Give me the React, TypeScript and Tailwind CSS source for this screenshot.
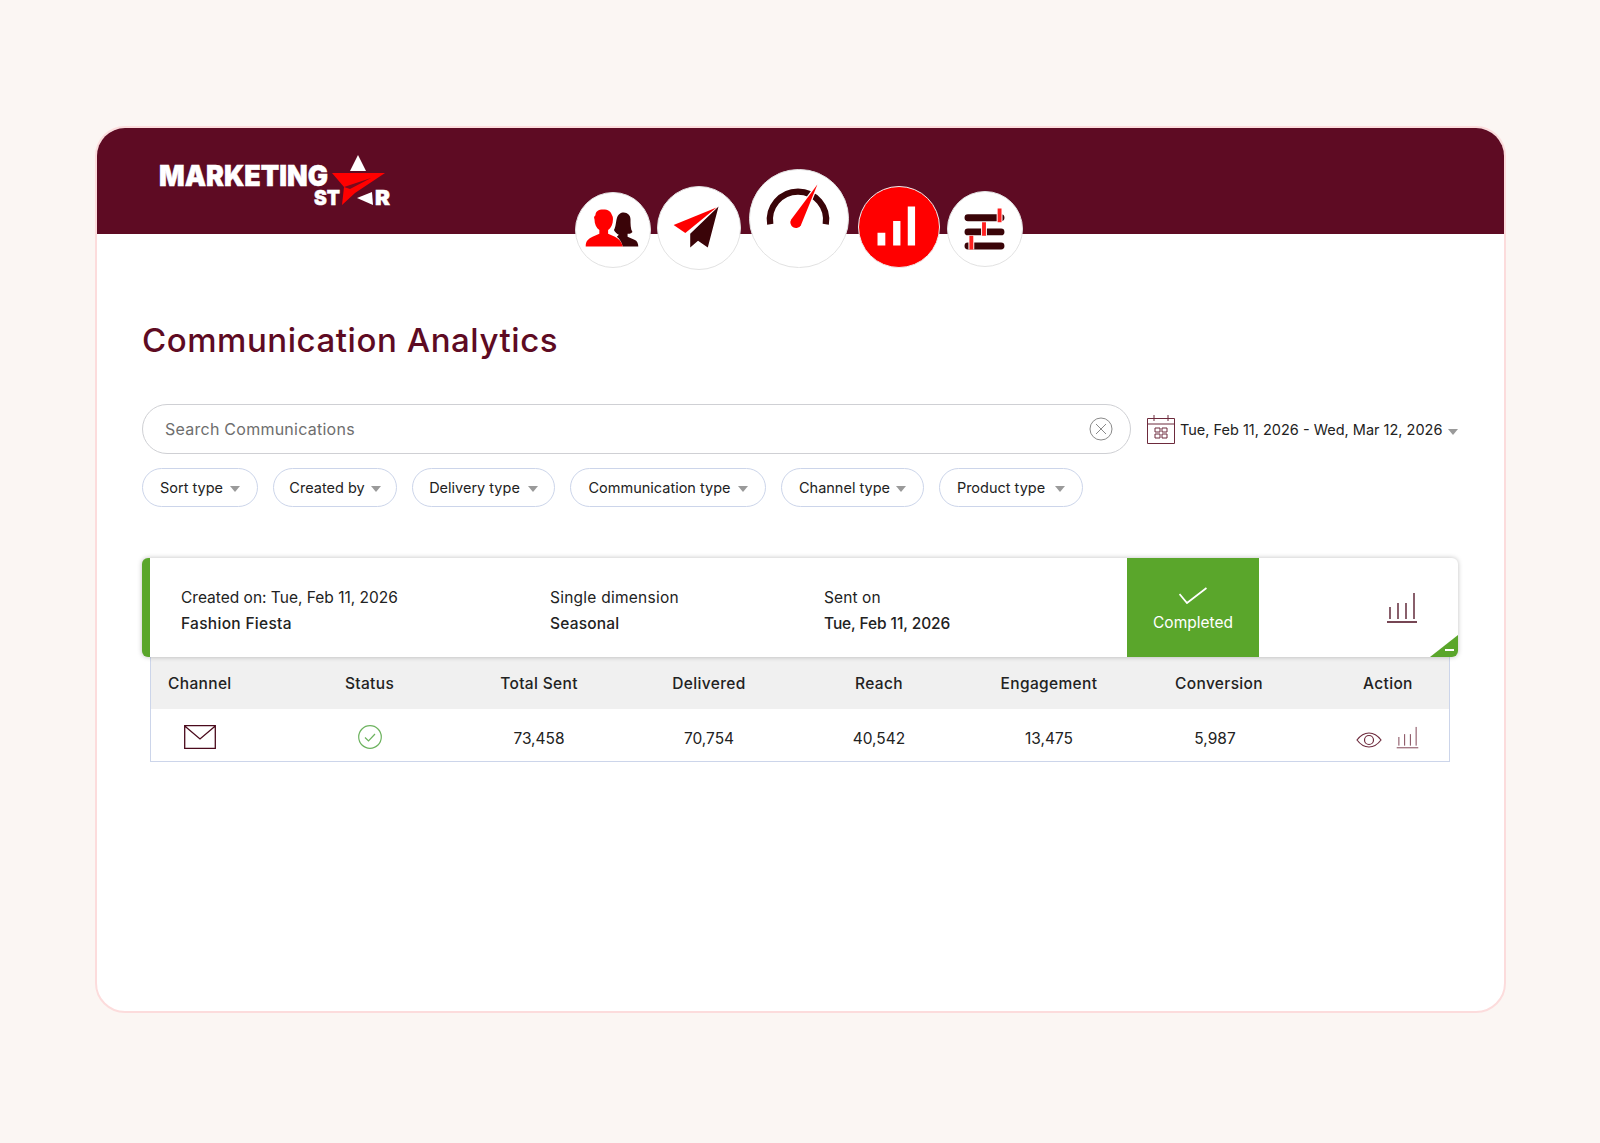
const filters = [
  { label: 'Sort type', w: 'w-[116px]', gap: 'gap-[7px]' },
  { label: 'Created by', w: 'w-[124px]', gap: 'gap-[6px]' },
  { label: 'Delivery type', w: 'w-[143px]', gap: 'gap-[8px]' },
  { label: 'Communication type', w: 'w-[196px]', gap: 'gap-[7px]' },
  { label: 'Channel type', w: 'w-[143px]', gap: 'gap-[6px]' },
  { label: 'Product type', w: 'w-[144px]', gap: 'gap-[10px]' },
]

const columns = ['Total Sent', 'Delivered', 'Reach', 'Engagement', 'Conversion']
const values = ['73,458', '70,754', '40,542', '13,475', '5,987']

function Caret() {
  return <span className="inline-block w-0 h-0 border-x-[5px] border-x-transparent border-t-[6px] border-t-[#9a9a9a] mt-[2px]" />
}

function Logo() {
  return (
    <svg width="240" height="60" viewBox="0 0 240 60" className="block">
      <g fontFamily="Inter, 'Liberation Sans', sans-serif" fontWeight="900" fill="#fff" stroke="#fff" strokeWidth="0.5">
        <text x="5" y="33" fontSize="29" textLength="169" lengthAdjust="spacingAndGlyphs">MARKETING</text>
        <text x="160" y="52" fontSize="20" textLength="26" lengthAdjust="spacingAndGlyphs">ST</text>
        <text x="221" y="52" fontSize="20" textLength="15" lengthAdjust="spacingAndGlyphs">R</text>
      </g>
      <polygon points="204,2 196,18 212,18" fill="#fff" />
      <polygon points="178,20 231,20 201,40 188,52 190,34" fill="#ff0000" />
      <path d="M190 34 L217 25 L196 36 Z" fill="#7a0a1c" />
      <polygon points="203,45 218,39 219,52" fill="#fff" />
    </svg>
  )
}

function NavCircle({ size, mb, bg, children }: { size: string; mb: string; bg: string; children: React.ReactNode }) {
  return <div className={`${size} ${mb} ${bg} rounded-full border border-[#e2e2e2] shrink-0 overflow-hidden`}>{children}</div>
}

function BarsIcon({ className, color, sw }: { className: string; color: string; sw: number }) {
  return (
    <svg viewBox="0 0 32 32" fill="none" stroke={color} strokeWidth={sw} className={className}>
      <path d="M1 31h30M4 28v-12M12 28V12M20 28v-16M28 28V2" />
    </svg>
  )
}

export default function App() {
  return (
    <div className="min-h-screen bg-[#fbf6f3] pt-[126px] pl-[95px] font-['Inter','Liberation_Sans',sans-serif] text-[#222]">
      <div className="w-[1411px] h-[887px] bg-white border-2 border-[#fcdcdc] rounded-[30px] overflow-hidden">
        <header className="h-[106px] bg-[#5e0b23] pl-[57px] pt-[25px]">
          <Logo />
        </header>

        <nav className="flex items-end h-[100px] -mt-[64px] pl-[478px]">
          <NavCircle size="w-[76px] h-[76px]" mb="mb-[2px]" bg="bg-white">
            <svg viewBox="0 0 76 76" className="w-full h-full -translate-x-px -translate-y-px">
              <path d="M40 39C42 36 42 30 43 27C44 23 47 21 50 21C54 21 57 24 57 28C57 33 57 38 59 41C57 43 55 43 54 43V46L61 49C64 50 65 53 65 56H49C48 52 46 48 43 46L45 44C43 43 41 41 40 39Z" fill="#3a0408" />
              <path d="M11 56c0-6 3-8 7-10l7-3v-4c-3-2-5-6-5-11-1-2 0-3 1-4 0-4 3-6 8-6s8 2 9 6c1 1 1 3 1 4 0 5-2 9-5 11v4l7 3c4 2 7 5 8 10z" fill="#ff0000" />
            </svg>
          </NavCircle>
          <NavCircle size="w-[84px] h-[84px]" mb="" bg="bg-white ml-[6px]">
            <svg viewBox="0 0 84 84" className="w-full h-full">
              <polygon points="16,39 60,21 28,47" fill="#ff0000" />
              <polygon points="62,20 51,62 41,55 33,62 33,48" fill="#3a0408" />
            </svg>
          </NavCircle>
          <NavCircle size="w-[100px] h-[99px]" mb="mb-[2px]" bg="bg-white ml-[8px]">
            <svg viewBox="0 0 100 100" className="w-full h-full -translate-x-px">
              <path d="M21.4 56A29 29 0 1 1 78.6 56" fill="none" stroke="#3a0408" strokeWidth="6.500" />
              <path d="M70 15 L53 57 A5.500 5.500 0 0 1 43 51 Z" fill="#ff0000" stroke="#fff" strokeWidth="2.500" paintOrder="stroke" />
            </svg>
          </NavCircle>
          <NavCircle size="w-[82px] h-[82px]" mb="mb-[2px]" bg="bg-[#ff0000] border-[#f0f0f0] ml-[9px]">
            <svg viewBox="0 0 82 82" className="w-full h-full -translate-x-px -translate-y-px">
              <path d="M20 48h8v13h-8zM36 36h7.500v25H36zM51 21h7.500v40H51z" fill="#fff" />
            </svg>
          </NavCircle>
          <NavCircle size="w-[76px] h-[76px]" mb="mb-[3px]" bg="bg-white ml-[7px]">
            <svg viewBox="0 0 76 76" className="w-full h-full -translate-x-px -translate-y-px">
              <path d="M21.500 27.500h34M21.500 42h34M21.500 56.500h34" stroke="#3a0408" strokeWidth="7" strokeLinecap="round" fill="none" />
              <path d="M54 18v14M38 32v14M25 46v14" stroke="#fff" strokeWidth="6" />
              <path d="M54 18v14M38 32v14M25 46v14" stroke="#ff2020" strokeWidth="4" />
            </svg>
          </NavCircle>
        </nav>

        <main className="pl-[45px]">
          <h1 className="mt-[48px] h-[44px] text-[33px] leading-[44px] font-medium text-[#5e0b23] tracking-[0.55px]">
            Communication Analytics
          </h1>

          <div className="mt-[42px] flex items-center">
            <div className="w-[989px] h-[50px] border border-[#cfd0d4] rounded-full flex items-center justify-between pl-[22px] pr-[17px]">
              <span className="text-[16px] text-[#6e6e6e] tracking-[0.25px]">Search Communications</span>
              <svg viewBox="0 0 24 24" className="w-[24px] h-[24px]" fill="none" stroke="#8a8a8a" strokeWidth="1">
                <circle cx="12" cy="12" r="11" />
                <path d="M7 7l10 10M17 7L7 17" />
              </svg>
            </div>
            <svg viewBox="0 0 28 30" className="w-[28px] h-[30px] ml-[16px]" fill="none" stroke="#6d2a3c" strokeWidth="1">
              <path d="M.5 4.500h27v25H.5zM.5 10h27M7 1v6M21 1v6" />
              <path d="M8 14h5v4H8zM15 14h5v4h-5zM8 20h5v4H8zM15 20h5v4h-5z" />
            </svg>
            <span className="ml-[5px] mt-[1px] text-[14.500px]">Tue, Feb 11, 2026 - Wed, Mar 12, 2026</span>
            <span className="ml-[6px]"><Caret /></span>
          </div>

          <div className="mt-[14px] flex gap-[15px]">
            {filters.map((f) => (
              <div key={f.label} className={`${f.w} ${f.gap} h-[39px] border border-[#ccd5ea] rounded-full flex items-center justify-center text-[14.500px]`}>
                {f.label}
                <Caret />
              </div>
            ))}
          </div>

          <section className="mt-[51px] w-[1316px]">
            <div className="relative h-[99px] flex items-stretch bg-white rounded-[6px] border-l-[8px] border-[#5aa62b] shadow-[0_0_5px_rgba(0,0,0,0.25)] overflow-hidden">
              <div className="w-[400px] pl-[31px] pt-[7px] flex flex-col justify-center gap-[8px] text-[15.500px] leading-[18px]">
                <span>Created on: Tue, Feb 11, 2026</span>
                <span className="font-medium tracking-[0.3px]">Fashion Fiesta</span>
              </div>
              <div className="w-[274px] pt-[7px] flex flex-col justify-center gap-[8px] text-[15.500px] leading-[18px]">
                <span className="tracking-[0.25px]">Single dimension</span>
                <span className="font-medium tracking-[0.2px]">Seasonal</span>
              </div>
              <div className="w-[303px] pt-[7px] flex flex-col justify-center gap-[8px] text-[15.500px] leading-[18px]">
                <span className="tracking-[0.1px]">Sent on</span>
                <span className="font-medium -tracking-[0.1px]">Tue, Feb 11, 2026</span>
              </div>
              <div className="w-[132px] bg-[#5aa62b] flex flex-col items-center justify-center text-white text-[15.500px]">
                <svg viewBox="0 0 28 17" className="w-[28px] h-[17px] mt-[6px]" fill="none" stroke="#fff" strokeWidth="1.800">
                  <path d="M.5 7l7.500 9L27.500 1" />
                </svg>
                <span className="mt-[7px]">Completed</span>
              </div>
              <div className="flex-1 flex items-center pl-[127px]">
                <BarsIcon className="w-[32px] h-[32px] -mt-[2px]" color="#4a0a1c" sw={1.3} />
              </div>
              <div className="absolute right-0 bottom-0 w-0 h-0 border-l-[28px] border-l-transparent border-b-[22px] border-b-[#5aa62b]" />
              <div className="absolute right-[4px] bottom-[6px] w-[9px] h-[2px] bg-white" />
            </div>

            <div className="w-[1300px] ml-[8px] border border-t-0 border-[#ccd5ea]">
              <div className="grid grid-cols-[133px_repeat(6,170px)_1fr] h-[52px] items-center bg-[#f0f0f0] text-[15.500px] font-medium tracking-[0.35px]">
                <span className="pl-[17px] mt-[2px]">Channel</span>
                <span className="text-center pl-[1px] mt-[2px]">Status</span>
                {columns.map((c) => (
                  <span key={c} className="text-center mt-[2px]">{c}</span>
                ))}
                <span className="pl-[59px] mt-[2px]">Action</span>
              </div>
              <div className="grid grid-cols-[133px_repeat(6,170px)_1fr] h-[52px] items-center text-[15.500px]">
                <span className="pl-[33px] mt-[4px]">
                  <svg viewBox="0 0 32 24" className="w-[32px] h-[24px]" fill="none" stroke="#4a0a1c" strokeWidth="1.300">
                    <path d="M.7.7h30.600v22.600H.7zM.7 1L16 14 31.300 1" />
                  </svg>
                </span>
                <span className="flex justify-center pl-[1px] mt-[4px]">
                  <svg viewBox="0 0 24 24" className="w-[24px] h-[24px]" fill="none" stroke="#6db35f" strokeWidth="1.200">
                    <circle cx="12" cy="12" r="11.300" />
                    <path d="M7 12.500l3.500 3.500 6.500-7" />
                  </svg>
                </span>
                {values.map((v, i) => (
                  <span key={v} className={i === 4 ? 'text-center pr-[8px] mt-[8px]' : 'text-center mt-[8px]'}>{v}</span>
                ))}
                <span className="flex items-center pl-[52px] gap-[14px] mt-[3px]">
                  <svg viewBox="0 0 26 16" className="w-[26px] h-[16px] mt-[7px]" fill="none" stroke="#6d2a3c" strokeWidth="1.200">
                    <path d="M1 8c3-4 7-7 12-7s9 3 12 7c-3 4-7 7-12 7S4 12 1 8z" />
                    <circle cx="13" cy="8" r="4.500" />
                  </svg>
                  <BarsIcon className="w-[23px] h-[24px]" color="#6d2a3c" sw={1.2} />
                </span>
              </div>
            </div>
          </section>
        </main>
      </div>
    </div>
  )
}
